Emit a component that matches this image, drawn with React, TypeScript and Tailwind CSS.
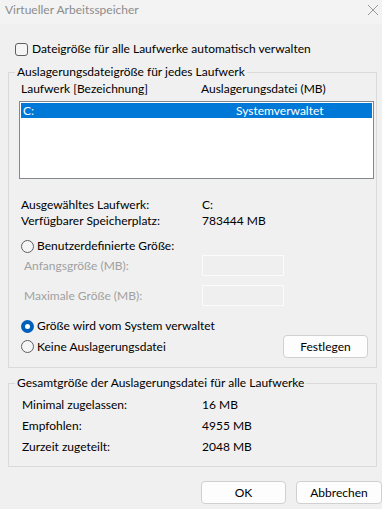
import React from "react";

function Radio({ checked }: { checked?: boolean }) {
  return checked ? (
    <span className="flex h-[13px] w-[13px] shrink-0 items-center justify-center rounded-full bg-[#005fb8]">
      <span className="h-[5px] w-[5px] rounded-full bg-white" />
    </span>
  ) : (
    <span className="h-[13px] w-[13px] shrink-0 rounded-full border border-[#5f5f5f] bg-[#f5f5f5]" />
  );
}

export default function App() {
  return (
    <div className="h-[509px] w-[382px] overflow-hidden bg-[#f0f0f0] font-['Lato',sans-serif] text-[12px] leading-[16px] text-black">
      {/* title bar */}
      <div className="flex h-[24px] items-center justify-between bg-[#f3f3f3] pl-[5px] pr-[2px]">
        <span className="text-[#8c8c8c] -mt-[4px]">Virtueller Arbeitsspeicher</span>
        <svg width="12" height="12" viewBox="0 0 12 12" className="mr-[1px] -mt-[4px]">
          <path d="M1 1 L11 11 M11 1 L1 11" stroke="#9a9a9a" strokeWidth="1" />
        </svg>
      </div>

      {/* checkbox */}
      <div className="mt-[17px] flex h-[16px] items-center pl-[15px]">
        <span className="h-[13px] w-[13px] shrink-0 rounded-[3px] border border-[#5f5f5f] bg-[#f5f5f5]" />
        <span className="ml-[4px]">Dateigröße für alle Laufwerke automatisch verwalten</span>
      </div>

      {/* group 1 */}
      <fieldset className="ml-[8px] mt-[7px] w-[369px] border border-[#dadada] pb-[9px] pl-[10px]">
        <legend className="-ml-[4px] px-[2px] leading-[16px]">Auslagerungsdateigröße für jedes Laufwerk</legend>
        <div className="mt-[1px] flex h-[16px] items-center pl-[2px]">
          <span className="w-[180px]">Laufwerk [Bezeichnung]</span>
          <span>Auslagerungsdatei (MB)</span>
        </div>
        <div className="mt-[4px] h-[78px] w-[355px] border border-[#828790] bg-white p-[1px]">
          <div className="flex h-[15px] items-center bg-[#0078d7] pl-[2px] text-white">
            <span className="w-[213px]">C:</span>
            <span>Systemverwaltet</span>
          </div>
        </div>
        <div className="mt-[18px] flex h-[16px] items-center pl-[2px]">
          <span className="w-[181px]">Ausgewähltes Laufwerk:</span>
          <span>C:</span>
        </div>
        <div className="flex h-[16px] items-center pl-[2px]">
          <span className="w-[181px]">Verfügbarer Speicherplatz:</span>
          <span>783444 MB</span>
        </div>
        <div className="mt-[9px] flex h-[16px] items-center gap-[3px] pl-[2px]">
          <Radio />
          <span>Benutzerdefinierte Größe:</span>
        </div>
        <div className="mt-[1px] flex h-[21px] items-center">
          <span className="w-[183px] pl-[5px] text-[#a0a0a0]">Anfangsgröße (MB):</span>
          <span className="h-[21px] w-[82px] border border-[#fbfbfb] bg-[#efefef]" />
        </div>
        <div className="mt-[9px] flex h-[21px] items-center">
          <span className="w-[183px] pl-[5px] text-[#a0a0a0]">Maximale Größe (MB):</span>
          <span className="h-[21px] w-[82px] border border-[#fbfbfb] bg-[#efefef]" />
        </div>
        <div className="mt-[12px] flex h-[16px] items-center gap-[3px] pl-[2px]">
          <Radio checked />
          <span>Größe wird vom System verwaltet</span>
        </div>
        <div className="mt-[1px] flex h-[23px] items-center pl-[2px]">
          <Radio />
          <span className="ml-[3px]">Keine Auslagerungsdatei</span>
          <button className="ml-auto mr-[8px] flex h-[23px] w-[85px] items-center justify-center rounded-[4px] border border-[#d0d0d0] bg-[#fdfdfd]">
            Festlegen
          </button>
        </div>
      </fieldset>

      {/* group 2 */}
      <fieldset className="ml-[8px] mt-[7px] w-[369px] border border-[#dadada] pb-[9px] pl-[10px]">
        <legend className="-ml-[4px] px-[2px] leading-[16px]">Gesamtgröße der Auslagerungsdatei für alle Laufwerke</legend>
        <div className="mt-[3px] flex h-[21px] items-center pl-[3px]">
          <span className="w-[180px]">Minimal zugelassen:</span>
          <span>16 MB</span>
        </div>
        <div className="flex h-[21px] items-center pl-[3px]">
          <span className="w-[180px]">Empfohlen:</span>
          <span>4955 MB</span>
        </div>
        <div className="flex h-[21px] items-center pl-[3px]">
          <span className="w-[180px]">Zurzeit zugeteilt:</span>
          <span>2048 MB</span>
        </div>
      </fieldset>

      {/* buttons */}
      <div className="mt-[14px] flex justify-end gap-[10px]">
        <button className="flex h-[23px] w-[85px] items-center justify-center rounded-[4px] border border-[#d0d0d0] bg-[#fdfdfd]">
          OK
        </button>
        <button className="flex h-[23px] w-[86px] items-center justify-center rounded-[4px] border border-[#d0d0d0] bg-[#fdfdfd]">
          Abbrechen
        </button>
      </div>
    </div>
  );
}
